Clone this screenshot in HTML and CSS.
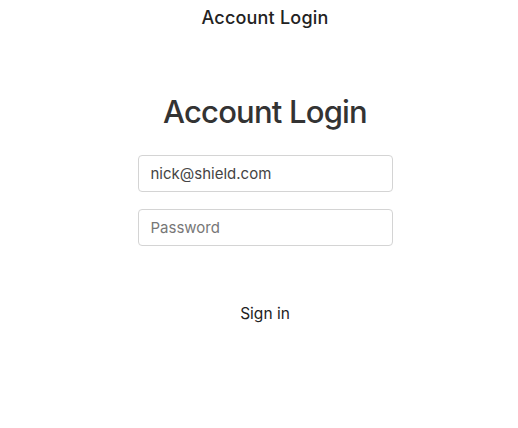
FILE: index.html
```html
<!DOCTYPE html>
<html>
<head>
<meta charset="utf-8">
<link rel="stylesheet" href="styles.css">
</head>
<body>
<div class="window">
  <header class="titlebar">Account Login</header>
  <main class="content">
    <h1 class="heading">Account Login</h1>
    <form class="form">
      <input class="field" type="text" value="nick@shield.com">
      <input class="field" type="password" placeholder="Password">
      <button class="signin" type="button">Sign in</button>
    </form>
  </main>
</div>
</body>
</html>
```
FILE: styles.css
```css
* { box-sizing: border-box; }
html, body { margin: 0; padding: 0; background: #fff; }
body { font-family: Inter, "Noto Sans", sans-serif; color: #333; }
.window { width: 518px; height: 428px; padding-left: 12px; display: flex; flex-direction: column; align-items: center; }
.titlebar { height: 34px; padding-top: 7px; font-size: 18px; font-weight: 500; letter-spacing: 0.2px; color: #222; text-align: center; }
.content { display: flex; flex-direction: column; align-items: center; }
.heading { margin: 60px 0 0 0; font-size: 31px; font-weight: 500; letter-spacing: -0.8px; line-height: 36px; color: #333; }
.form { display: flex; flex-direction: column; align-items: center; margin-top: 25px; gap: 17px; }
.field { width: 255px; height: 37px; border: 1px solid #d4d4d4; border-radius: 4px; padding: 0 12px; font-family: inherit; font-size: 15px; color: #444; outline: none; }
.field::placeholder { color: #777; }
.signin { margin-top: 33px; background: none; border: none; font-family: inherit; font-size: 15.5px; color: #222; padding: 8px 12px; }
```
